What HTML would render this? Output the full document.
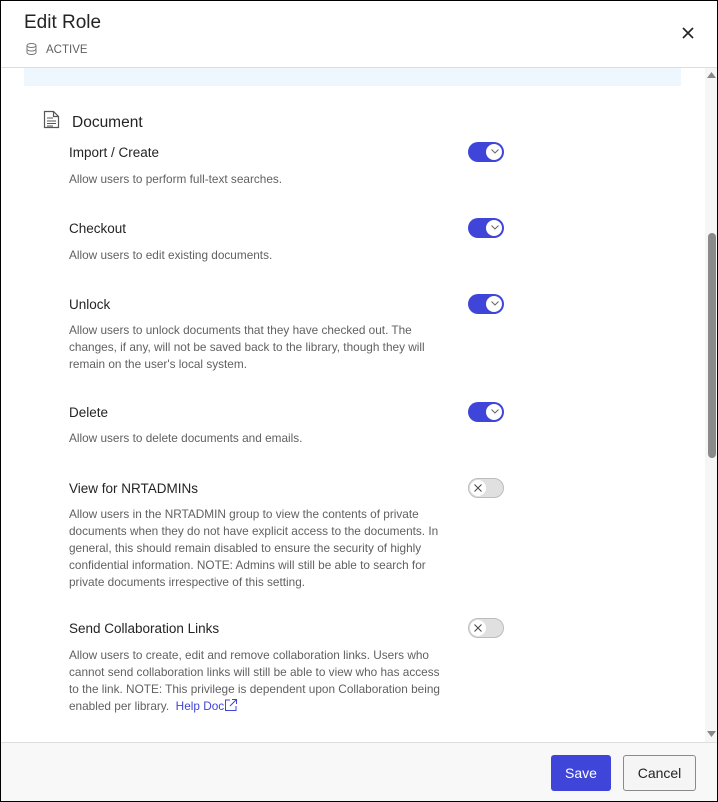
<!DOCTYPE html>
<html><head><style>
*{margin:0;padding:0;box-sizing:border-box}
body{width:718px;height:802px;overflow:hidden;background:#fff;font-family:"Liberation Sans",sans-serif;position:relative}
.frame{position:absolute;left:0;top:0;width:718px;height:802px;border:1px solid #000}
.a{position:absolute;white-space:nowrap}
.lbl{font-size:13.5px;color:#242424}
.d{font-size:11.8px;color:#616161;line-height:17px;left:69px}
.tog{position:absolute;left:468px;width:36px;height:20px;border-radius:10px}
.on{background:#3f45d9}
.on::after{content:"";position:absolute;right:2px;top:2px;width:16px;height:16px;border-radius:50%;background:#fff}
.on svg{position:absolute;right:5px;top:7px;z-index:1}
.off{background:#e0e0e0;border:1px solid #bdbdbd}
.off::after{content:"";position:absolute;left:1px;top:1px;width:16px;height:16px;border-radius:50%;background:#fff}
.off svg{position:absolute;left:5px;top:5px;z-index:1}
</style></head><body>
<div class="a" style="left:24px;top:12px;font-size:19px;color:#242424">Edit Role</div>
<svg class="a" style="left:26px;top:43px" width="11" height="12" viewBox="0 0 11 12"><ellipse cx="5.5" cy="2.5" rx="4.5" ry="2" fill="none" stroke="#777"/><path d="M1 2.5v7c0 1.1 2 2 4.5 2s4.5-.9 4.5-2v-7M1 6c0 1.1 2 2 4.5 2S10 7.1 10 6" fill="none" stroke="#777"/></svg>
<div class="a" style="left:46px;top:44px;font-size:11.5px;color:#616161">ACTIVE</div>
<svg class="a" style="left:682px;top:27px" width="12" height="12" viewBox="0 0 12 12"><path d="M1 1L11 11M11 1L1 11" stroke="#242424" stroke-width="1.6"/></svg>
<div class="a" style="left:0;top:67px;width:718px;height:1px;background:#ddd"></div>
<div class="a" style="left:24px;top:68px;width:657px;height:18px;background:#eef7fd"></div>
<svg class="a" style="left:43px;top:110px" width="17" height="19" viewBox="0 0 17 19"><path d="M1.5 1.5h9l5 5v11h-14z M10.5 1.5v5h5" fill="none" stroke="#555" stroke-width="1.2"/><path d="M4 8h6M4 11h9M4 13.5h9M4 16h6" stroke="#555" stroke-width="1.1"/></svg>
<div class="a" style="left:72px;top:114px;font-size:15.5px;color:#242424">Document</div>

<div class="a lbl" style="left:69px;top:145px">Import / Create</div>
<div class="a d" style="top:171px">Allow users to perform full-text searches.</div>
<div class="a lbl" style="left:69px;top:221px">Checkout</div>
<div class="a d" style="top:247px">Allow users to edit existing documents.</div>
<div class="a lbl" style="left:69px;top:297px">Unlock</div>
<div class="a d" style="top:322px">Allow users to unlock documents that they have checked out. The<br>changes, if any, will not be saved back to the library, though they will<br>remain on the user's local system.</div>
<div class="a lbl" style="left:69px;top:405px">Delete</div>
<div class="a d" style="top:430px">Allow users to delete documents and emails.</div>
<div class="a lbl" style="left:69px;top:481px">View for NRTADMINs</div>
<div class="a d" style="top:506px">Allow users in the NRTADMIN group to view the contents of private<br>documents when they do not have explicit access to the documents. In<br>general, this should remain disabled to ensure the security of highly<br>confidential information. NOTE: Admins will still be able to search for<br>private documents irrespective of this setting.</div>
<div class="a lbl" style="left:69px;top:621px">Send Collaboration Links</div>
<div class="a d" style="top:647px">Allow users to create, edit and remove collaboration links. Users who<br>cannot send collaboration links will still be able to view who has access<br>to the link. NOTE: This privilege is dependent upon Collaboration being<br>enabled per library. <span style="color:#3f45d9">&nbsp;Help Doc</span><svg width="14" height="14" viewBox="0 0 14 14" style="vertical-align:-2px"><path d="M6 2H1.5v10.5H12V8M8 1.5h4.5V6M12.5 1.5L6 8" fill="none" stroke="#3f45d9"/></svg></div>

<div class="tog on" style="top:142px"><svg width="8" height="5" viewBox="0 0 8 5"><path d="M.5.5L4 4 7.5.5" fill="none" stroke="#666"/></svg></div>
<div class="tog on" style="top:218px"><svg width="8" height="5" viewBox="0 0 8 5"><path d="M.5.5L4 4 7.5.5" fill="none" stroke="#666"/></svg></div>
<div class="tog on" style="top:294px"><svg width="8" height="5" viewBox="0 0 8 5"><path d="M.5.5L4 4 7.5.5" fill="none" stroke="#666"/></svg></div>
<div class="tog on" style="top:402px"><svg width="8" height="5" viewBox="0 0 8 5"><path d="M.5.5L4 4 7.5.5" fill="none" stroke="#666"/></svg></div>
<div class="tog off" style="top:478px"><svg width="8" height="8" viewBox="0 0 8 8"><path d="M.5.5l7 7M7.5.5l-7 7" stroke="#444"/></svg></div>
<div class="tog off" style="top:618px"><svg width="8" height="8" viewBox="0 0 8 8"><path d="M.5.5l7 7M7.5.5l-7 7" stroke="#444"/></svg></div>

<div class="a" style="left:705px;top:68px;width:12px;height:674px;background:#f6f6f6"></div>
<div class="a" style="left:708px;top:233px;width:8px;height:225px;border-radius:4px;background:#8a8a8a"></div>
<svg class="a" style="left:707px;top:72px" width="9" height="6"><path d="M0 6L4.5 0 9 6z" fill="#888"/></svg>
<svg class="a" style="left:707px;top:731px" width="9" height="6"><path d="M0 0L4.5 6 9 0z" fill="#888"/></svg>

<div class="a" style="left:0;top:742px;width:718px;height:60px;background:#f8f8f8;border-top:1px solid #ddd"></div>
<div class="a" style="left:551px;top:755px;width:60px;height:36px;background:#3f45d9;border-radius:3px;color:#fff;font-size:14px;text-align:center;line-height:36px">Save</div>
<div class="a" style="left:623px;top:755px;width:73px;height:36px;background:#f5f5f5;border:1px solid #8a8a8a;border-radius:3px;color:#242424;font-size:14px;text-align:center;line-height:34px">Cancel</div>
<div class="frame"></div>
</body></html>
